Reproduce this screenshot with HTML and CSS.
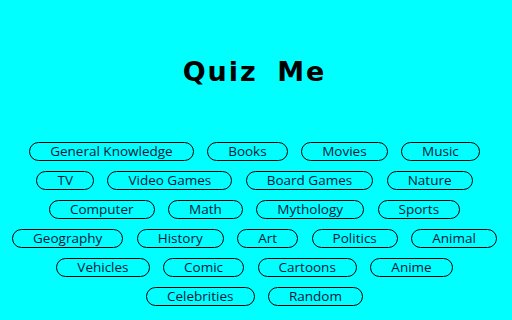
FILE: index.html
```html
<!DOCTYPE html>
<html>
<head>
<meta charset="utf-8">
<link rel="stylesheet" href="styles.css">
</head>
<body>
<main class="page">
  <h1 class="title">Quiz Me</h1>
  <div class="topics">
    <button class="topic">General Knowledge</button>
    <button class="topic">Books</button>
    <button class="topic">Movies</button>
    <button class="topic">Music</button>
    <button class="topic">TV</button>
    <button class="topic">Video Games</button>
    <button class="topic">Board Games</button>
    <button class="topic">Nature</button>
    <button class="topic">Computer</button>
    <button class="topic">Math</button>
    <button class="topic">Mythology</button>
    <button class="topic">Sports</button>
    <button class="topic">Geography</button>
    <button class="topic">History</button>
    <button class="topic">Art</button>
    <button class="topic">Politics</button>
    <button class="topic">Animal</button>
    <button class="topic">Vehicles</button>
    <button class="topic">Comic</button>
    <button class="topic">Cartoons</button>
    <button class="topic">Anime</button>
    <button class="topic">Celebrities</button>
    <button class="topic">Random</button>
  </div>
</main>
</body>
</html>
```
FILE: styles.css
```css
html, body {
  margin: 0;
  padding: 0;
  background: #00ffff;
}
.page {
  width: 512px;
  height: 320px;
  padding: 58px 11px 0 8px;
  box-sizing: border-box;
}
.title {
  margin: 0;
  height: 28px;
  line-height: 28px;
  text-align: center;
  font-family: "DejaVu Sans", sans-serif;
  font-weight: bold;
  font-size: 27px;
  letter-spacing: 2px;
  word-spacing: 8px;
  color: #000;
}
.topics {
  margin-top: 56px;
  display: flex;
  flex-wrap: wrap;
  justify-content: center;
  gap: 10px 13.5px;
}
.topic {
  height: 19px;
  padding: 0 20px;
  border: 1px solid #000;
  border-radius: 10px;
  background: transparent;
  font-family: "Open Sans", sans-serif;
  font-size: 13.5px;
  line-height: 17px;
  color: #06183a;
}
```
